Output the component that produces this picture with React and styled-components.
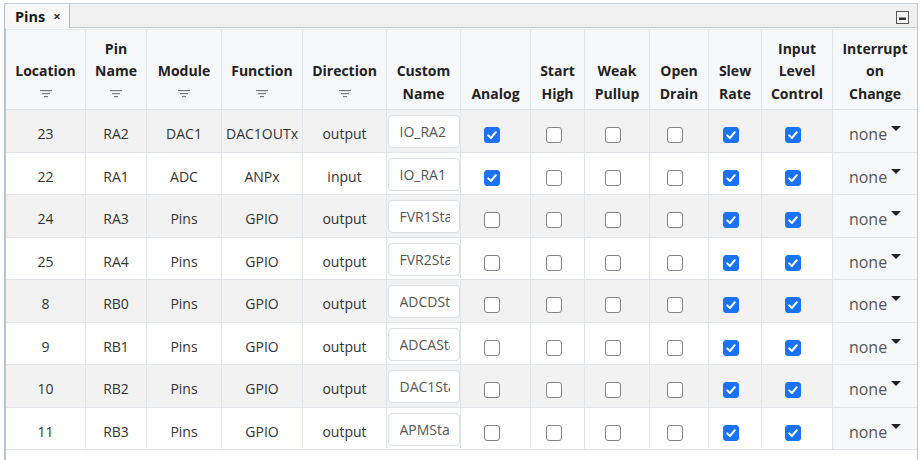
import React from "react";
import styled, { createGlobalStyle } from "styled-components";

const GlobalStyle = createGlobalStyle`
  html, body {
    margin: 0;
    padding: 0;
    background: #ffffff;
  }
  body {
    font-family: "Open Sans", "Noto Sans", sans-serif;
  }
`;

const COLUMNS = [
  { key: "loc", title: ["Location"], width: 80, filter: true },
  { key: "pin", title: ["Pin", "Name"], width: 61, filter: true },
  { key: "mod", title: ["Module"], width: 75, filter: true },
  { key: "fn", title: ["Function"], width: 81, filter: true },
  { key: "dir", title: ["Direction"], width: 84, filter: true },
  { key: "name", title: ["Custom", "Name"], width: 74 },
  { key: "analog", title: ["Analog"], width: 70 },
  { key: "high", title: ["Start", "High"], width: 54 },
  { key: "wpu", title: ["Weak", "Pullup"], width: 65 },
  { key: "od", title: ["Open", "Drain"], width: 59 },
  { key: "slew", title: ["Slew", "Rate"], width: 53 },
  { key: "ilc", title: ["Input", "Level", "Control"], width: 71 },
  { key: "ioc", title: ["Interrupt", "on", "Change"], width: 84 },
];

const ROWS = [
  { loc: 23, pin: "RA2", mod: "DAC1", fn: "DAC1OUTx", dir: "output", name: "IO_RA2", analog: true },
  { loc: 22, pin: "RA1", mod: "ADC", fn: "ANPx", dir: "input", name: "IO_RA1", analog: true },
  { loc: 24, pin: "RA3", mod: "Pins", fn: "GPIO", dir: "output", name: "FVR1Start" },
  { loc: 25, pin: "RA4", mod: "Pins", fn: "GPIO", dir: "output", name: "FVR2Start" },
  { loc: 8, pin: "RB0", mod: "Pins", fn: "GPIO", dir: "output", name: "ADCDStart" },
  { loc: 9, pin: "RB1", mod: "Pins", fn: "GPIO", dir: "output", name: "ADCAStart" },
  { loc: 10, pin: "RB2", mod: "Pins", fn: "GPIO", dir: "output", name: "DAC1Start" },
  { loc: 11, pin: "RB3", mod: "Pins", fn: "GPIO", dir: "output", name: "APMStart" },
];

const CHECK_KEYS = ["analog", "high", "wpu", "od", "slew", "ilc"];

function FilterIcon() {
  return (
    <svg width="12" height="8" viewBox="0 0 12 8">
      <rect x="0" y="0" width="12" height="1.2" fill="#7a7a7a" />
      <rect x="2" y="3" width="8" height="1.2" fill="#7a7a7a" />
      <rect x="4" y="6" width="4" height="1.2" fill="#7a7a7a" />
    </svg>
  );
}

function CheckMark() {
  return (
    <svg width="16" height="16" viewBox="0 0 16 16">
      <path d="M4.2 8.4 L6.9 11 L11.8 5.2" fill="none" stroke="#fff" strokeWidth="2" strokeLinecap="round" strokeLinejoin="round" />
    </svg>
  );
}

function MinimizeIcon() {
  return (
    <svg width="13" height="13" viewBox="0 0 13 13">
      <rect x="0.5" y="0.5" width="12" height="12" fill="#f4f4f4" stroke="#555" />
      <rect x="3" y="6.5" width="7" height="2.5" fill="#333" />
    </svg>
  );
}

function Cell({ row, col }) {
  const value = row[col.key];
  if (col.key === "name") {
    return (
      <Td>
        <NameInput readOnly value={value} />
      </Td>
    );
  }
  if (col.key === "ioc") {
    return (
      <Td $tinted>
        <Select>
          none<Caret />
        </Select>
      </Td>
    );
  }
  if (CHECK_KEYS.includes(col.key)) {
    const checked = col.key === "slew" || col.key === "ilc" || !!value;
    return (
      <Td>
        <Check $checked={checked}>{checked && <CheckMark />}</Check>
      </Td>
    );
  }
  return <Td>{value}</Td>;
}

export default function App() {
  return (
    <Page>
      <GlobalStyle />
      <Panel>
        <TabBar>
          <Tab>
            Pins <Close>×</Close>
          </Tab>
          <TabTools>
            <MinimizeIcon />
          </TabTools>
        </TabBar>
        <TableWrap>
          <Table>
            <colgroup>
              {COLUMNS.map((c) => (
                <col key={c.key} style={{ width: c.width }} />
              ))}
            </colgroup>
            <thead>
              <tr>
                {COLUMNS.map((c) => (
                  <Th key={c.key}>
                    {c.title.map((t) => (
                      <HeadLine key={t}>{t}</HeadLine>
                    ))}
                    {c.filter && (
                      <HeadLine>
                        <FilterIcon />
                      </HeadLine>
                    )}
                  </Th>
                ))}
              </tr>
            </thead>
            <tbody>
              {ROWS.map((r, i) => (
                <Tr key={r.loc} $odd={i % 2 === 0}>
                  {COLUMNS.map((c) => (
                    <Cell key={c.key} row={r} col={c} />
                  ))}
                </Tr>
              ))}
            </tbody>
          </Table>
        </TableWrap>
      </Panel>
    </Page>
  );
}

const Page = styled.div`
  width: 923px;
  height: 460px;
  padding: 3px 0 0 4px;
  box-sizing: border-box;
  overflow: hidden;
`;

const Panel = styled.div`
  width: 914px;
  height: 460px;
  box-sizing: border-box;
  border-top: 1px solid #c9d2dc;
  border-left: 2px solid #b8c6d4;
  border-right: 1px solid #b8c6d4;
  display: flex;
  flex-direction: column;
`;

const TabBar = styled.div`
  height: 23px;
  background: #f0f0f0;
  border-bottom: 1px solid #c3ccd6;
  display: flex;
  align-items: stretch;
  justify-content: space-between;
  margin-left: -2px;
`;

const Tab = styled.div`
  display: flex;
  align-items: center;
  gap: 5px;
  padding: 0 8px 0 10px;
  margin-bottom: -1px;
  background: #f8f8f8;
  border: 1px solid #b4bcc6;
  border-top: none;
  border-bottom: none;
  border-top-left-radius: 2px;
  font-size: 14.5px;
  font-weight: 700;
  color: #1a1a1a;
`;

const Close = styled.span`
  font-size: 13px;
  font-weight: 700;
  color: #333;
  margin-left: 3px;
`;

const TabTools = styled.div`
  display: flex;
  align-items: center;
  padding-right: 8px;
  padding-top: 3px;
`;

const TableWrap = styled.div`
  padding-top: 1px;
  flex: 1;
`;

const Table = styled.table`
  width: 911px;
  table-layout: fixed;
  border-collapse: separate;
  border-spacing: 0;
  font-size: 14px;
  color: #333;
`;

const Th = styled.th`
  height: 81px;
  box-sizing: border-box;
  background: #f7f8fa;
  border-right: 1px solid #e1e5ea;
  border-bottom: 1px solid #dde2e7;
  border-top: 1px solid #e6e9ed;
  vertical-align: bottom;
  padding: 0 0 4px 0;
  font-size: 14px;
  font-weight: 700;
  color: #222;
  &:last-child {
    border-right: none;
  }
`;

const HeadLine = styled.div`
  line-height: 22.5px;
  height: 22.5px;
  white-space: nowrap;
  display: flex;
  align-items: center;
  justify-content: center;
`;

const Tr = styled.tr`
  height: 42.5px;
  background: ${(p) => (p.$odd ? "#f2f2f2" : "#ffffff")};
`;

const Td = styled.td`
  box-sizing: border-box;
  border-right: 1px solid #e1e5ea;
  border-bottom: 1px solid #e1e5ea;
  text-align: center;
  vertical-align: middle;
  padding: 6px 0 0 0;
  white-space: nowrap;
  overflow: hidden;
  background: ${(p) => (p.$tinted ? "#f7f8fa" : "transparent")};
  &:last-child {
    border-right: none;
  }
`;

const NameInput = styled.input`
  display: block;
  width: 72px;
  height: 33px;
  margin: -4px auto 0 auto;
  box-sizing: border-box;
  border: 1px solid #dcdfe3;
  border-radius: 4px;
  background: #fff;
  padding: 0 9px 0 11px;
  font-family: "Open Sans", "Noto Sans", sans-serif;
  font-size: 14px;
  color: #555;
  outline: none;
`;

const Check = styled.span`
  display: inline-flex;
  align-items: center;
  justify-content: center;
  width: 16px;
  height: 16px;
  box-sizing: border-box;
  border-radius: 3px;
  margin-right: 8px;
  vertical-align: middle;
  background: ${(p) => (p.$checked ? "#1a73f5" : "#fff")};
  border: ${(p) => (p.$checked ? "1px solid #1a73f5" : "1.5px solid #858585")};
  svg {
    display: block;
    margin: -1px;
  }
`;

const Select = styled.span`
  display: inline-flex;
  align-items: flex-start;
  font-size: 16px;
  color: #555;
  line-height: 20px;
  padding-top: 1px;
`;

const Caret = styled.span`
  display: inline-block;
  width: 0;
  height: 0;
  margin-left: 4px;
  margin-top: 2px;
  border-left: 5px solid transparent;
  border-right: 5px solid transparent;
  border-top: 5px solid #222;
`;
